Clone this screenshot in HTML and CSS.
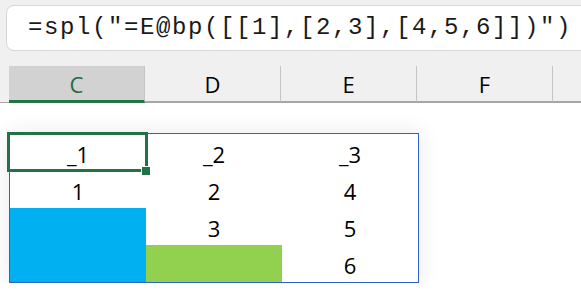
FILE: index.html
```html
<!DOCTYPE html>
<html>
<head>
    <title>Spill preview</title>
    <link rel="stylesheet" href="styles.css">
</head>
<body>
    <div class="top-bar">
        <div class="formula-box">=spl("=E@bp([[1],[2,3],[4,5,6]])")</div>
    </div>

    <div class="col-headers">
        <div class="corner"></div>
        <div class="col-head selected">C</div>
        <div class="col-head">D</div>
        <div class="col-head">E</div>
        <div class="col-head">F</div>
        <div class="col-head"></div>
    </div>

    <div class="sheet">
        <div class="spill-card">
            <div class="cell">_1</div>
            <div class="cell">_2</div>
            <div class="cell">_3</div>
            <div class="cell">1</div>
            <div class="cell">2</div>
            <div class="cell">4</div>
            <div class="cell fill-blue"></div>
            <div class="cell">3</div>
            <div class="cell">5</div>
            <div class="cell fill-green"></div>
            <div class="cell">6</div>

            <!-- active cell outline -->
            <div class="selection"></div>
            <div class="fill-handle"></div>
        </div>
    </div>
</body>
</html>
```

FILE: styles.css
```css
body {
    margin: 0;
    background: white;
    font-family: "Open Sans", "Noto Sans", sans-serif;
    color: #000;
    overflow: hidden;
}
.top-bar {
    height: 66px;
    padding: 5px 0 0 6px;
    box-sizing: border-box;
    background: #f0f0f0;
    overflow: hidden;
}
.formula-box {
    height: 46px;
    margin-right: -20px;
    padding-left: 21px;
    box-sizing: border-box;
    background: white;
    border: 1px solid #d6d6d6;
    border-radius: 8px;
    font-family: "Liberation Mono", monospace;
    font-size: 24px;
    letter-spacing: 1.6px;
    line-height: 44px;
    white-space: nowrap;
    overflow: hidden;
    color: #1a1a1a;
}
.col-headers {
    display: flex;
    height: 37px;
    background: #f0f0f0;
    overflow: hidden;
    box-shadow: inset 0 -1px 0 #a6a6a6;
}
.corner {
    width: 9px;
    flex: none;
}
.col-head {
    width: 136px;
    flex: none;
    box-sizing: border-box;
    border-right: 1px solid #c4c4c4;
    border-bottom: 1px solid #a6a6a6;
    height: 36px;
    text-align: center;
    font-size: 22px;
    line-height: 37px;
}
.col-head.selected {
    background: #d2d2d2;
    color: #1d6b41;
    height: 37px;
    border-bottom: 3px solid #217346;
}
.sheet {
    padding: 30px 0 0 9px;
}
.spill-card {
    position: relative;
    display: grid;
    grid-template-columns: 136px 136px 136px;
    grid-template-rows: repeat(4, 37px);
    width: max-content;
    border: 1px solid #2f62c8;
    box-shadow: 0 0 22px rgba(0,0,0,0.09);
    background: white;
}
.cell {
    text-align: center;
    font-size: 22px;
    line-height: 40px;
}
.fill-blue {
    grid-row: span 2;
    background: #00b0f0;
}
.fill-green {
    background: #92d050;
}
.selection {
    position: absolute;
    left: -3px;
    top: -2px;
    width: 141px;
    height: 40px;
    box-sizing: border-box;
    border: 3px solid #217346;
}
.fill-handle {
    position: absolute;
    left: 131px;
    top: 32px;
    width: 8px;
    height: 8px;
    background: #217346;
    border-left: 1px solid white;
    border-top: 1px solid white;
}
```
